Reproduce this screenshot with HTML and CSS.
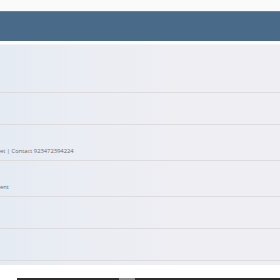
FILE: index.html
```html
<!DOCTYPE html>
<html lang="en">
<head>
  <meta charset="UTF-8">
  <title>Contacts</title>
  <meta name="viewport" content="width=device-width, initial-scale=1">
  <link rel="stylesheet" href="styles.css">
</head>
<body>

  <div class="topbar"></div>
  <div class="header"></div>

  <div class="panel">
    <div class="row row-first"></div>
    <div class="row row-short"></div>
    <div class="row row-mid"><span class="cell">et | Contact 923472394224</span></div>
    <div class="row row-mid"><span class="cell">ent</span></div>
    <div class="row row-short"></div>
    <div class="row row-short"></div>
  </div>

  <div class="footer">
    <div class="scrollbar"><span class="thumb"></span></div>
  </div>

</body>
</html>
```

FILE: styles.css
```css
body {
  font-family: 'Open Sans', 'DejaVu Sans', sans-serif;
  background: #ffffff;
  margin: 0;
  width: 280px;
  height: 280px;
  overflow: hidden;
}

.topbar {
  height: 11px;
  background: #fafafa;
}

.header {
  height: 30px;
  background: #4a6a89;
  border-top: 1px solid #6d8299;
  box-sizing: border-box;
}

.panel {
  margin-top: 3px;
  height: 221px;
  background: linear-gradient(90deg, #e5ebf3 0%, #eaedf3 25%, #eeeef3 60%, #efeff3 100%);
  border-top: 1px solid #f4f4f7;
  box-sizing: border-box;
}

.row {
  border-bottom: 1px solid #dcdcdf;
  box-sizing: border-box;
  display: flex;
  align-items: flex-end;
}

.row-first {
  height: 48px;
}

.row-short {
  height: 32px;
}

.row-mid {
  height: 36px;
  padding-bottom: 5px;
}

.cell {
  font-size: 5.8px;
  color: #686868;
  white-space: nowrap;
  line-height: 8px;
}

.footer {
  height: 15px;
  padding-top: 13px;
  padding-left: 17px;
  background: #ffffff;
}

.scrollbar {
  height: 2px;
  background: #2e2e2e;
  position: relative;
}

.thumb {
  position: absolute;
  left: 102px;
  top: 0;
  width: 16px;
  height: 2px;
  background: #8a8a8a;
}
```
